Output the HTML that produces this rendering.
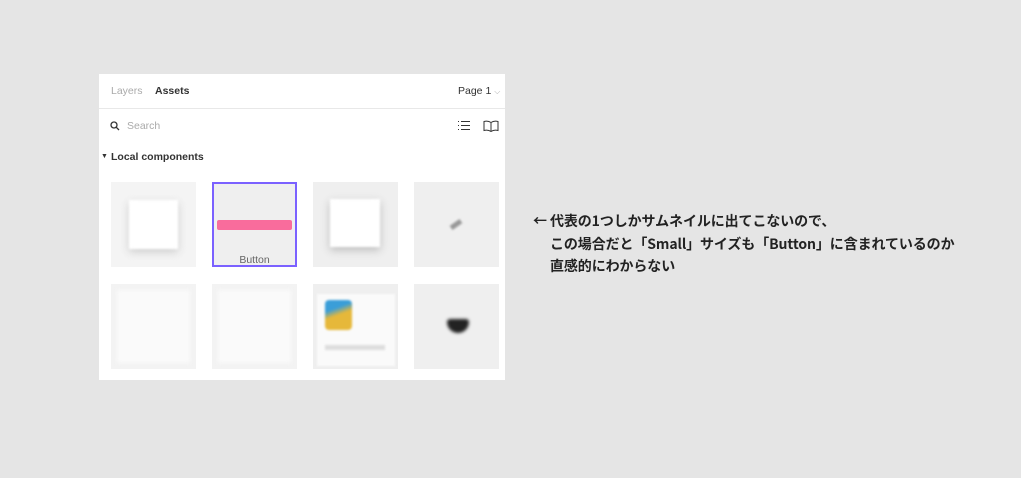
<!DOCTYPE html>
<html><head><meta charset="utf-8"><style>
body{margin:0;width:1021px;height:478px;background:#e5e5e5;position:relative;overflow:hidden;font-family:"Liberation Sans","Noto Sans CJK JP",sans-serif}
.p{position:absolute;left:99px;top:74px;width:406px;height:306px;background:#fff}
.t{position:absolute;width:85px;height:85px;background:#efefef}
.a{position:absolute;font-size:10.5px;color:#333}
.n{position:absolute;left:533px;font-family:"Noto Sans CJK JP",sans-serif;font-weight:bold;font-size:14px;color:#222;white-space:nowrap;letter-spacing:-0.1px}
</style></head><body>
<div class="p">
 <div class="a" style="left:12px;top:11px;color:#aaa">Layers</div>
 <div class="a" style="left:56px;top:11px;font-weight:bold">Assets</div>
 <div class="a" style="left:359px;top:11px">Page 1 <span style="color:#aaa;font-size:8px">⌵</span></div>
 <div style="position:absolute;left:0;top:34px;width:406px;height:1px;background:#e8e8e8"></div>
 <svg style="position:absolute;left:11px;top:47px" width="10" height="10"><circle cx="4" cy="4" r="3" fill="none" stroke="#333" stroke-width="1.3"/><line x1="6.3" y1="6.3" x2="9" y2="9" stroke="#333" stroke-width="1.3"/></svg>
 <div class="a" style="left:28px;top:46px;color:#aaa">Search</div>
 <svg style="position:absolute;left:359px;top:46px" width="12" height="12" stroke="#333" stroke-width="1"><path d="M0 1.5h1M3 1.5h9M0 5.5h1M3 5.5h9M0 9.5h1M3 9.5h9"/></svg>
 <svg style="position:absolute;left:384px;top:46px" width="16" height="12" fill="none" stroke="#333" stroke-width="1"><path d="M8 2.5Q5 0.5 1 1.5V10.5Q5 9.5 8 11.5Q11 9.5 15 10.5V1.5Q11 0.5 8 2.5V11.5"/></svg>
 <div class="a" style="left:2px;top:79px;font-size:7px">▼</div>
 <div class="a" style="left:12px;top:77px;font-weight:bold">Local components</div>
 <div class="t" style="left:12px;top:108px;background:#f4f4f4"><div style="position:absolute;left:18px;top:18px;width:49px;height:49px;background:#fff;box-shadow:0 3px 8px #ccc;filter:blur(1px)"></div></div>
 <div class="t" style="left:113px;top:108px;box-sizing:border-box;border:2px solid #7b61ff"><div style="position:absolute;left:3px;top:36px;width:75px;height:10px;background:#f96c9c;border-radius:2px"></div><div style="position:absolute;left:0;width:81px;top:70px;text-align:center;font-size:10.5px;color:#666">Button</div></div>
 <div class="t" style="left:214px;top:108px"><div style="position:absolute;left:17px;top:17px;width:50px;height:48px;background:#fff;box-shadow:0 3px 8px #bbb;filter:blur(1px)"></div></div>
 <div class="t" style="left:315px;top:108px"><div style="position:absolute;left:36px;top:40px;width:12px;height:5px;background:#999;transform:rotate(-35deg);filter:blur(1px)"></div></div>
 <div class="t" style="left:12px;top:210px;background:#f3f3f3"><div style="position:absolute;left:6px;top:6px;width:73px;height:73px;background:#fafafa;filter:blur(2px)"></div></div>
 <div class="t" style="left:113px;top:210px;background:#f3f3f3"><div style="position:absolute;left:6px;top:6px;width:73px;height:73px;background:#fafafa;filter:blur(2px)"></div></div>
 <div class="t" style="left:214px;top:210px"><div style="position:absolute;left:4px;top:10px;width:78px;height:72px;background:#fafafa;filter:blur(1px)"></div><div style="position:absolute;left:12px;top:16px;width:27px;height:30px;background:linear-gradient(160deg,#3a9ed8 30%,#e6b83a 50%);border-radius:4px;filter:blur(1px)"></div><div style="position:absolute;left:12px;top:61px;width:60px;height:5px;background:#ddd;filter:blur(1px)"></div></div>
 <div class="t" style="left:315px;top:210px"><div style="position:absolute;left:33px;top:35px;width:22px;height:14px;background:#222;border-radius:3px 3px 11px 11px;filter:blur(1.5px)"></div></div>
</div>
<div class="n" style="top:211px">← 代表の1つしかサムネイルに出てこないので、</div>
<div class="n" style="top:234px;left:550px">この場合だと「Small」サイズも「Button」に含まれているのか</div>
<div class="n" style="top:256px;left:550px">直感的にわからない</div>
</body></html>
